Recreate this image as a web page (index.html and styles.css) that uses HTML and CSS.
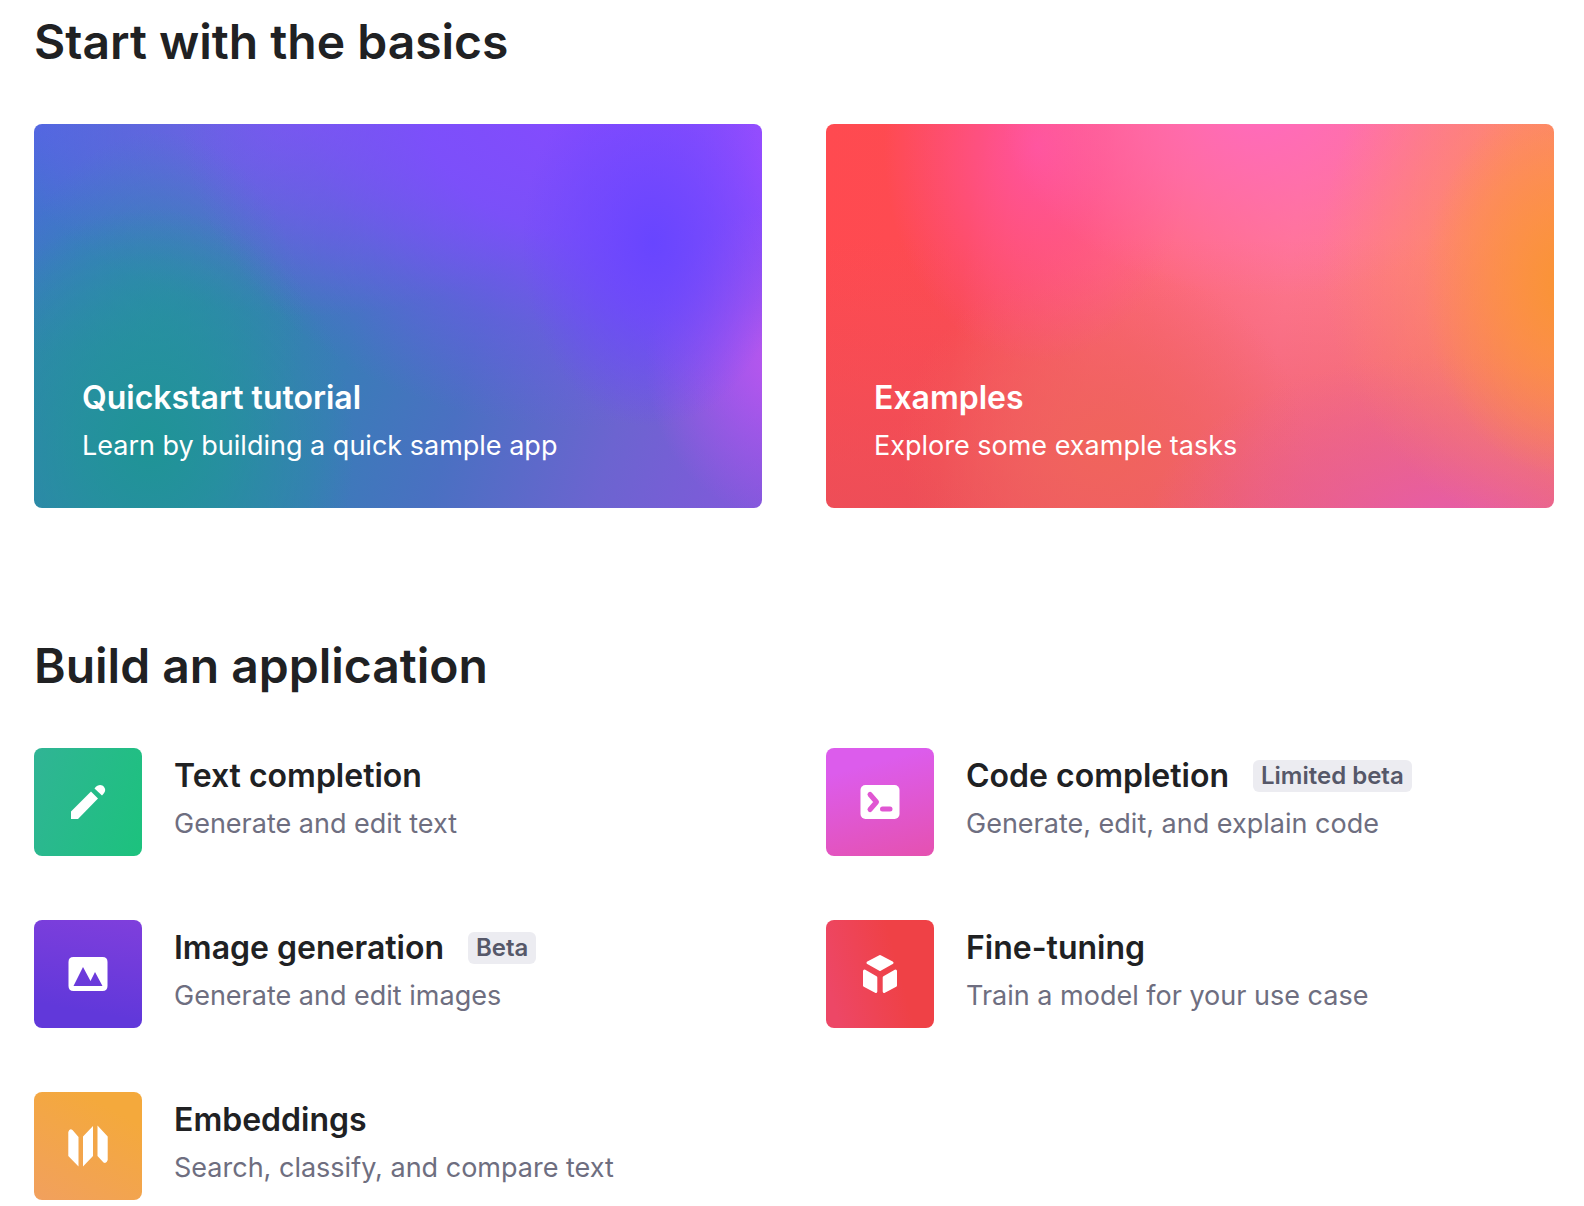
FILE: index.html
```html
<!DOCTYPE html>
<html lang="en">
<head>
<meta charset="utf-8">
<meta name="viewport" content="width=device-width, initial-scale=1">
<title>Documentation</title>
<link rel="stylesheet" href="styles.css">
</head>
<body>
<main class="page">
  <section class="section">
    <h2 class="heading">Start with the basics</h2>
    <div class="grid">
      <a class="card card-quickstart" href="#">
        <span class="card-title">Quickstart tutorial</span>
        <span class="card-text">Learn by building a quick sample app</span>
      </a>
      <a class="card card-examples" href="#">
        <span class="card-title">Examples</span>
        <span class="card-text">Explore some example tasks</span>
      </a>
    </div>
  </section>
  <section class="section">
    <h2 class="heading">Build an application</h2>
    <div class="grid">
      <a class="item" href="#">
        <span class="tile tile-green">
          <svg class="icon" viewBox="0 0 48 48" aria-hidden="true"><path d="M7 41V33.500L27 13.500L34 20.500L14 41ZM30.500 10.500C34 6 38 6.500 40 9C42 11.500 41.500 14 38 17.500Z"/></svg>
        </span>
        <span class="item-body">
          <span class="item-title">Text completion</span>
          <span class="item-text">Generate and edit text</span>
        </span>
      </a>
      <a class="item" href="#">
        <span class="tile tile-pink">
          <svg class="icon" viewBox="0 0 48 48" aria-hidden="true"><rect x="4.500" y="7" width="39" height="34" rx="5"/><path class="cut" d="M14 16.500L20.500 24L14 31.500M26.500 31H34"/></svg>
        </span>
        <span class="item-body">
          <span class="item-title">Code completion <span class="badge">Limited beta</span></span>
          <span class="item-text">Generate, edit, and explain code</span>
        </span>
      </a>
      <a class="item" href="#">
        <span class="tile tile-purple">
          <svg class="icon" viewBox="0 0 48 48" aria-hidden="true"><path fill-rule="evenodd" d="M9.500 7H38.500Q43.500 7 43.500 12V36Q43.500 41 38.500 41H9.500Q4.500 41 4.500 36V12Q4.500 7 9.500 7ZM9.500 36H38.500L31 22L26.500 31L19 17Z"/></svg>
        </span>
        <span class="item-body">
          <span class="item-title">Image generation <span class="badge">Beta</span></span>
          <span class="item-text">Generate and edit images</span>
        </span>
      </a>
      <a class="item" href="#">
        <span class="tile tile-red">
          <svg class="icon icon-round" viewBox="0 0 48 48" aria-hidden="true"><path d="M24 6.500L36 12.800L24 19.500L12 12.800ZM8.500 21L19.800 27.500V41.500L8.500 35.500ZM39.500 21L28.200 27.500V41.500L39.500 35.500Z"/></svg>
        </span>
        <span class="item-body">
          <span class="item-title">Fine-tuning</span>
          <span class="item-text">Train a model for your use case</span>
        </span>
      </a>
      <a class="item" href="#">
        <span class="tile tile-orange">
          <svg class="icon" viewBox="0 0 48 48" aria-hidden="true"><path d="M4.300 10Q5.500 6 8.500 8L14.500 15V44.500L4.300 34ZM19 14.500L29 4V34L19 44.500ZM33.500 3.500L43.700 14.500V38Q42.500 42 39.500 40.500L33.500 34Z"/></svg>
        </span>
        <span class="item-body">
          <span class="item-title">Embeddings</span>
          <span class="item-text">Search, classify, and compare text</span>
        </span>
      </a>
    </div>
  </section>
</main>
</body>
</html>
```
FILE: styles.css
```css
* { box-sizing: border-box; }

body {
  margin: 0;
  background: #fff;
  color: #202123;
  font-family: Inter, "Noto Sans", sans-serif;
}

a { color: inherit; text-decoration: none; }

.page {
  display: flex;
  flex-direction: column;
  gap: 128px;
  padding: 12px 30px 6px 34px;
}

.heading {
  margin: 0 0 52px;
  font-size: 48px;
  line-height: 60px;
  font-weight: 600;
}

.grid {
  display: grid;
  grid-template-columns: 1fr 1fr;
  gap: 64px;
}

.card {
  display: flex;
  flex-direction: column;
  justify-content: flex-end;
  min-height: 384px;
  padding: 0 48px 38px;
  border-radius: 8px;
  color: #fff;
}

.card-quickstart {
  background:
    radial-gradient(ellipse 18% 48% at 85% 31%, #6845ff 0%, #6c46ffb3 40%, #7548ff00 100%),
    radial-gradient(ellipse 18% 40% at 102% 62%, #b957ee 0%, #b355f099 45%, #b957f000 100%),
    radial-gradient(ellipse 26% 70% at 102% 10%, #984cff 0%, #924cff99 40%, #8c4cff00 100%),
    radial-gradient(ellipse 56% 84% at 76% -5%, #864aff 0%, #804cffdd 40%, #7354f077 70%, #7058e800 100%),
    radial-gradient(ellipse 28% 62% at 16% 84%, #1f9496 0%, #22939acc 35%, #3284b000 100%),
    radial-gradient(ellipse 20% 50% at 17% 52%, #2a90a6aa 0%, #2a90a600 100%),
    radial-gradient(ellipse 42% 52% at 38% -2%, #7e58f4 0%, #765cecaa 45%, #7a5af000 100%),
    radial-gradient(ellipse 35% 60% at 0% 0%, #4f68e0 0%, #4a6cda99 50%, #4a6cda00 100%),
    linear-gradient(105deg, #3284b0 0%, #3a7cb8 45%, #4a70c2 60%, #6c64d0 80%, #8358dc 100%);
}

.card-examples {
  background:
    radial-gradient(ellipse 20% 50% at 102% 42%, #f99433 0%, #fb9339aa 40%, #ff8f6b00 100%),
    radial-gradient(ellipse 36% 75% at 104% 34%, #ff9058 0%, #ff905877 50%, #ff8f6b00 100%),
    radial-gradient(ellipse 42% 46% at 86% 106%, #e65cac 0%, #e65fa499 45%, #e65cac00 100%),
    radial-gradient(ellipse 36% 50% at 60% -5%, #ff6abe 0%, #ff6cb699 50%, #ff6abe00 100%),
    radial-gradient(ellipse 21% 56% at 29% 6%, #ff529c 0%, #ff5290aa 45%, #ff529900 100%),
    radial-gradient(ellipse 28% 48% at 38% 84%, #f0645c 0%, #f0645c88 50%, #f0645c00 100%),
    linear-gradient(180deg, #e9546400 30%, #e3505c99 100%),
    linear-gradient(97deg, #ff4a50 0%, #fd4b52 20%, #ff6678 38%, #ff7890 62%, #fc8080 100%);
}

.card-title,
.item-title {
  font-size: 32px;
  line-height: 48px;
  font-weight: 600;
}

.card-text,
.item-text {
  font-size: 27px;
  line-height: 48px;
}

.item {
  display: flex;
  gap: 32px;
}

.tile {
  display: flex;
  flex: none;
  align-items: center;
  justify-content: center;
  width: 108px;
  height: 108px;
  border-radius: 8px;
}

.tile-green { background: linear-gradient(110deg, #30b495, #1cc27d); }
.tile-pink { background: linear-gradient(165deg, #dc5cec 20%, #e551b0); }
.tile-purple { background: linear-gradient(190deg, #7f3fdc, #6138da 80%); }
.tile-red { background: linear-gradient(75deg, #ed4766 10%, #ef4146 65%); }
.tile-orange { background: linear-gradient(30deg, #f1a05e, #f4a93c 80%); }

.icon { width: 48px; height: 48px; fill: #fff; }

.icon-round {
  stroke: #fff;
  stroke-width: 3;
  stroke-linejoin: round;
}

.cut {
  fill: none;
  stroke: #e056d2;
  stroke-width: 5;
  stroke-linecap: round;
  stroke-linejoin: round;
}

.item-body { display: flex; flex-direction: column; padding-top: 4px; }

.item-title { display: flex; align-items: center; gap: 24px; }

.item-text { color: #6e6e80; }

.badge {
  padding: 0 8px;
  border-radius: 6px;
  background: #ececf1;
  color: #565869;
  font-size: 24px;
  line-height: 32px;
  font-weight: 600;
}
```
